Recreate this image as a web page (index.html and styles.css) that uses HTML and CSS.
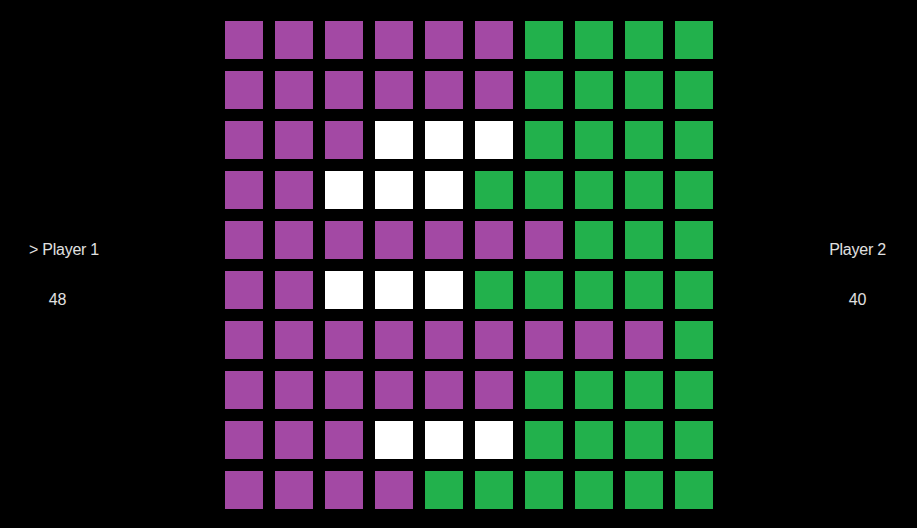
FILE: index.html
```html
<!DOCTYPE html>
<html lang="en">
<head>
  <meta charset="UTF-8" />
  <title>Board</title>
  <link rel="stylesheet" href="styles.css">
</head>
<body>

<div class="game">
  <div class="side left">
    <div class="name current">&gt; Player 1</div>
    <div class="score" id="score1">48</div>
  </div>

  <div class="board" id="board"></div>

  <div class="side right">
    <div class="name">Player 2</div>
    <div class="score" id="score2">40</div>
  </div>
</div>

<script>
  // p = player 1, g = player 2, w = empty
  const rows = [
    "ppppppgggg",
    "ppppppgggg",
    "pppwwwgggg",
    "ppwwwggggg",
    "pppppppggg",
    "ppwwwggggg",
    "pppppppppg",
    "ppppppgggg",
    "pppwwwgggg",
    "ppppgggggg"
  ];
  const names = { p: "purple", g: "green", w: "white" };
  const board = document.getElementById("board");

  rows.forEach(row => {
    row.split("").forEach(c => {
      const cell = document.createElement("div");
      cell.className = "cell " + names[c];
      board.appendChild(cell);
    });
  });
</script>

</body>
</html>
```

FILE: styles.css
```css
body {
  margin: 0;
  background: #000;
  font-family: "Liberation Sans", Arial, sans-serif;
  color: #e0e0e0;
}

.game {
  display: flex;
  height: 528px;
}

.side {
  width: 115px;
  text-align: center;
  font-size: 16px;
  line-height: 18px;
  letter-spacing: -0.25px;
}

.side .name {
  margin-top: 241px;
}

.side .score {
  margin-top: 32px;
}

.left .current {
  padding-left: 13px;
}

.right {
  margin-left: 87px;
}

.board {
  margin-left: 110px;
  margin-top: 21px;
  display: grid;
  grid-template-columns: repeat(10, 38px);
  grid-auto-rows: 38px;
  gap: 12px;
  align-self: flex-start;
}

.cell.purple {
  background: #a349a4;
}

.cell.green {
  background: #22b14c;
}

.cell.white {
  background: #fff;
}
```
